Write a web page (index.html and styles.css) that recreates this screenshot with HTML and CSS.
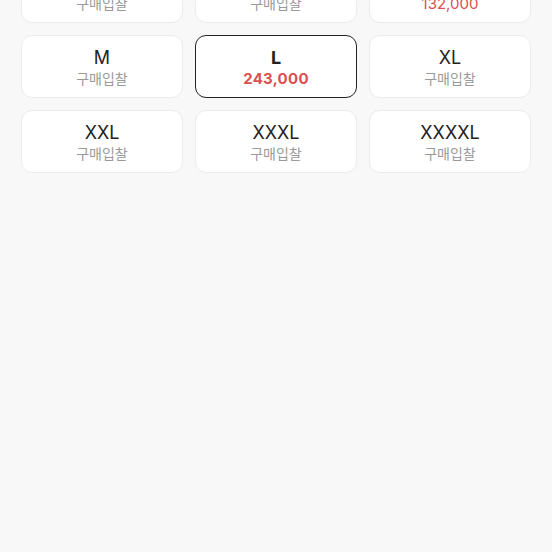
FILE: index.html
```html
<!DOCTYPE html>
<html lang="ko">
<head>
    <meta charset="UTF-8">
    <meta name="viewport" content="width=device-width, initial-scale=1.0">
    <title>사이즈 선택</title>
    <link rel="stylesheet" href="styles.css">
</head>
<body>
    <div class="size-grid">
        <!-- first row is scrolled partly out of view -->
        <div class="size-card">
            <span class="size">XS</span>
            <span class="bid">구매입찰</span>
        </div>
        <div class="size-card">
            <span class="size">S</span>
            <span class="bid">구매입찰</span>
        </div>
        <div class="size-card">
            <span class="size">XS</span>
            <span class="price">132,000</span>
        </div>

        <div class="size-card">
            <span class="size">M</span>
            <span class="bid">구매입찰</span>
        </div>
        <div class="size-card selected">
            <span class="size">L</span>
            <span class="price">243,000</span>
        </div>
        <div class="size-card">
            <span class="size">XL</span>
            <span class="bid">구매입찰</span>
        </div>

        <div class="size-card">
            <span class="size">XXL</span>
            <span class="bid">구매입찰</span>
        </div>
        <div class="size-card">
            <span class="size">XXXL</span>
            <span class="bid">구매입찰</span>
        </div>
        <div class="size-card">
            <span class="size">XXXXL</span>
            <span class="bid">구매입찰</span>
        </div>
    </div>
</body>
</html>
```

FILE: styles.css
```css
body {
    margin: 0;
    padding: 0;
    background-color: #f8f8f8;
    font-family: Inter, "Noto Sans CJK KR", sans-serif;
    color: #222;
    height: 552px;
    overflow: hidden;
}
.size-grid {
    display: grid;
    grid-template-columns: repeat(3, 1fr);
    gap: 12px;
    margin: -40px 21px 0 21px;
}
.size-card {
    height: 63px;
    box-sizing: border-box;
    background-color: #ffffff;
    border: 1px solid #ebebeb;
    border-radius: 11px;
    display: flex;
    flex-direction: column;
    align-items: center;
    justify-content: center;
    padding-top: 1px;
}
.size-card.selected {
    border: 1.5px solid #222;
}
.size {
    font-size: 18px;
    line-height: 21px;
}
.selected .size {
    font-weight: 700;
}
.bid {
    font-size: 14px;
    line-height: 19px;
    color: #9a9a9a;
    margin-top: 1px;
}
.price {
    font-size: 15px;
    line-height: 19px;
    color: #dc4f4f;
    margin-top: 1px;
}
.selected .price {
    font-weight: 700;
    letter-spacing: 0.3px;
}
```
